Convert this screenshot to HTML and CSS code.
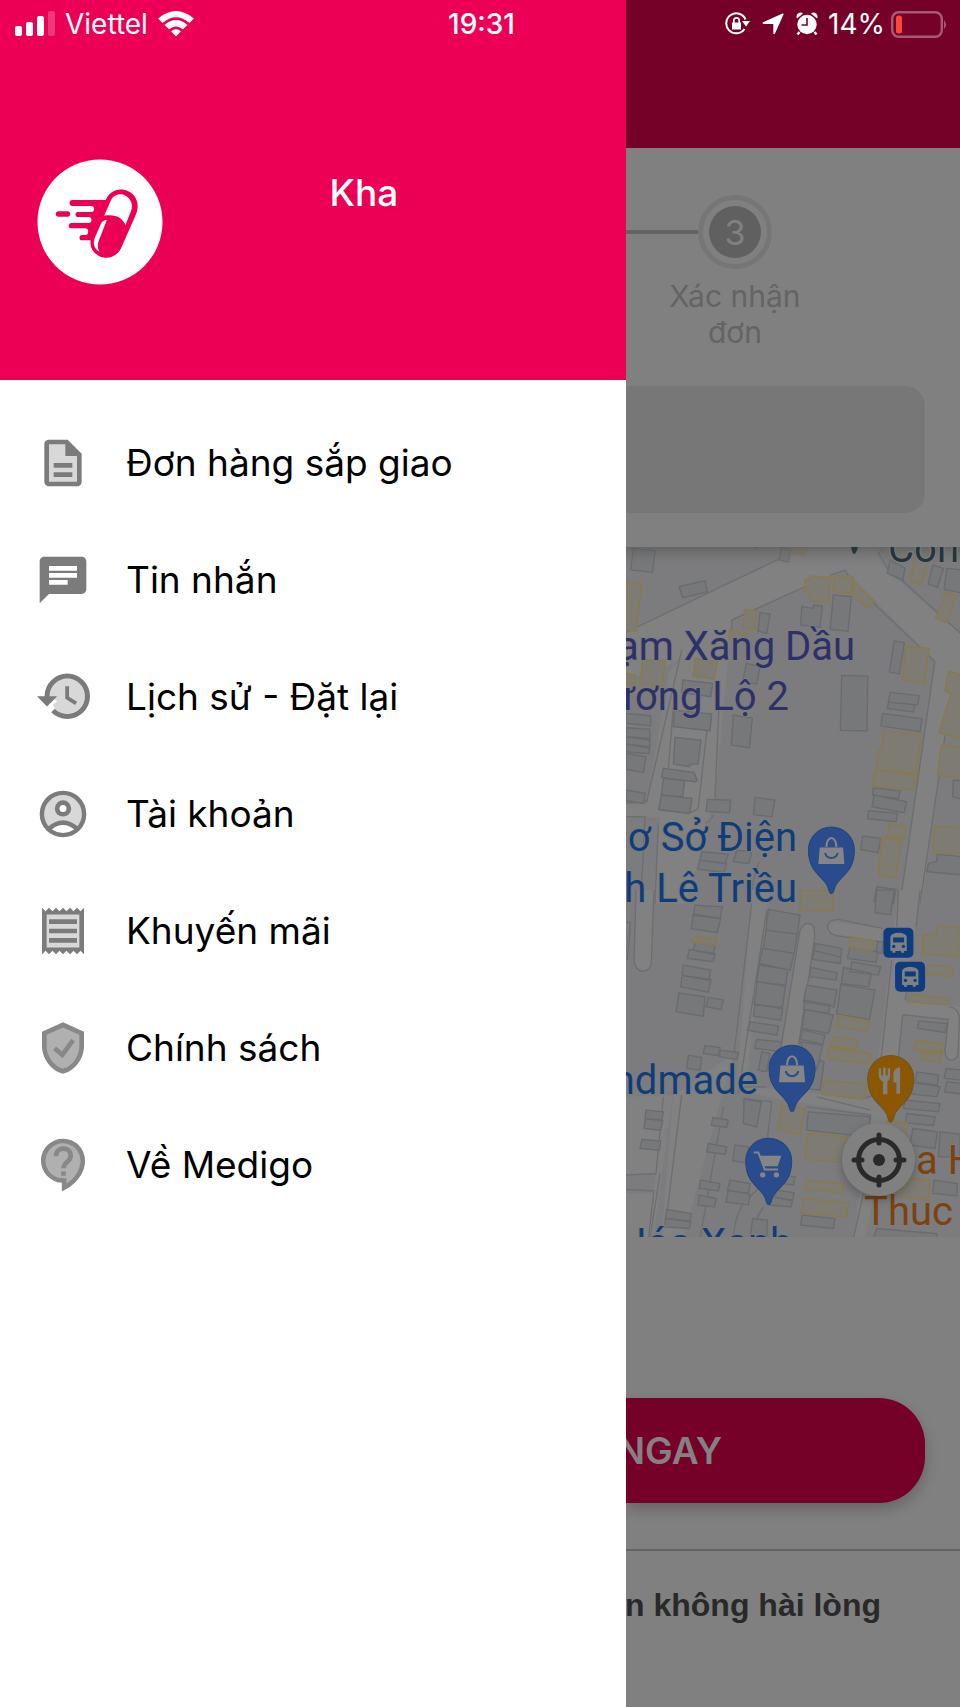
FILE: index.html
```html
<!DOCTYPE html>
<html lang="vi">
<head>
<meta charset="utf-8">
<meta name="viewport" content="width=device-width, initial-scale=1">
<title>Medigo</title>
<link rel="stylesheet" href="styles.css">
</head>
<body>
<div class="screen">
  <div class="status">
    <div class="status-left">
      <svg class="signal" viewBox="0 0 40 26" aria-hidden="true"><rect x="0" y="15" width="7" height="10" rx="2"/><rect x="11" y="11" width="7" height="14" rx="2"/><rect x="22" y="5" width="7" height="20" rx="2"/><rect x="33" y="0" width="7" height="25" rx="2" opacity=".22"/></svg>
      <span>Viettel</span>
      <svg class="wifi" viewBox="0 0 36 26" aria-hidden="true"><path d="M0 7.500Q18-7.500 36 7.500L31.500 12Q18 .500 4.500 12ZM6.500 14Q18 4 29.500 14L25 18.300Q18 12.500 11 18.300ZM13 20.200Q18 16.500 23 20.200L18 25.500Z"/></svg>
    </div>
    <time class="clock">19:31</time>
    <div class="status-right">
      <svg class="lock" viewBox="0 0 25 24" aria-hidden="true"><path d="M19.500 17A10 10 0 1 1 20.500 7.500" fill="none" stroke="#fff" stroke-width="2"/><path d="M17 9h8l-4 5.500ZM7 10.500h9v7H7Z"/><path d="M8.800 11V8.500a2.700 2.700 0 0 1 5.400 0V11" fill="none" stroke="#fff" stroke-width="1.700"/></svg>
      <svg class="arrow" viewBox="0 0 22 22" aria-hidden="true"><path d="M1 9.200 20.500.500q1.500-.300 1 1L13 20.500q-1.300 1.800-1.700-.300V11H1.700q-2-.500-.700-1.800Z"/></svg>
      <svg class="alarm" viewBox="0 0 22 24" aria-hidden="true"><path d="M3.500 20 1.500 22.500M18.500 20l2 2.500" stroke="#fff" stroke-width="2.400"/><circle cx="11" cy="12.500" r="9.700"/><path d="M1 6.500a4 4 0 0 1 6-5ZM21 6.500a4 4 0 0 0-6-5Z"/><path d="M11 6v7H5.500" fill="none" stroke="#750028" stroke-width="1.600"/></svg>
      <span>14%</span>
      <svg class="battery" viewBox="0 0 57 28" aria-hidden="true"><rect x="1.200" y="2.200" width="49.600" height="24.600" rx="6.500" fill="none" stroke="#a85a75" stroke-width="2.400"/><path d="M53 10q4 4.500 0 9Z" fill="#a85a75"/><rect x="5" y="5.500" width="6" height="18" rx="2.500" fill="#ff453a"/></svg>
    </div>
  </div>

  <aside class="drawer">
    <header class="profile">
      <svg class="logo" viewBox="0 0 375 378" role="img" aria-label="Medigo">
        <circle cx="187.500" cy="189" r="187.500" fill="#fff"/>
        <g fill="#eb0055">
          <path d="M205 123 105 123a9 9 0 0 0 0 18h56a9 9 0 0 1 0 18h-42a8 8 0 0 0 0 15h34a9 9 0 0 1 0 18h-51a8 8 0 0 0 0 16h40a9 9 0 0 1 0 20h-8a8 8 0 0 0 0 16h25q-3 33 27 48c28 12 54-2 65-25l44-100c13-30 2-58-22-70-30-14-59 2-68 26Z"/>
          <rect x="55" y="157" width="43" height="16" rx="8"/>
        </g>
        <path d="M200 170 219 127c9-22 30-25 45-17 17 9 24 27 17 45l-17 43c-8-20-29-34-64-28ZM208 183q-12 1-17 10l-19 43c-7 18-1 34 14 42-9-16-4-28 2-43Z" fill="#fff"/>
      </svg>
      <h1 class="user">Kha</h1>
    </header>
    <nav class="menu">
      <a href="#"><svg viewBox="0 0 24 24" aria-hidden="true"><path class="lt" d="M5 3h9l5 6v12H5Z"/><path d="M8 16h8v2H8zm0-4h8v2H8zm6-10H6c-1.100 0-2 .900-2 2v16c0 1.100.890 2 1.990 2H18c1.100 0 2-.900 2-2V8l-6-6zm4 18H6V4h7v5h5v11z"/></svg><span>Đơn hàng sắp giao</span></a>
      <a href="#"><svg viewBox="0 0 24 24" aria-hidden="true"><path d="M4 2h16c1.100 0 2 .900 2 2v12c0 1.100-.900 2-2 2H6l-4 4V4c0-1.100.900-2 2-2zm2 12h8v-2H6v2zm0-3h12V9H6v2zm0-3h12V6H6v2z"/></svg><span>Tin nhắn</span></a>
      <a href="#"><svg viewBox="0.200 1.200 22.200 22.200" aria-hidden="true"><path class="lt" d="M6 12a7 7 0 1 1 2.500 5.300L7.200 15.500 9 14Z"/><path d="M13 3a9 9 0 0 0-9 9H1l3.960 4.030L9 12H6c0-3.870 3.130-7 7-7s7 3.130 7 7-3.130 7-7 7c-1.930 0-3.680-.790-4.940-2.060l-1.420 1.420A8.954 8.954 0 0 0 13 21a9 9 0 0 0 0-18zM12.200 8v5l3.900 2.500.8-1.300-3.200-2V8z"/></svg><span>Lịch sử - Đặt lại</span></a>
      <a href="#"><svg viewBox="0 0 24 24" aria-hidden="true"><circle cx="12" cy="12" r="10"/><circle class="lt" cx="12" cy="12" r="8.100"/><path d="M5.500 17.500Q12 11.800 18.500 17.500L16 20.500H8Z"/><path d="M7.200 18.600Q12 14.800 16.800 18.600Q12 21.700 7.200 18.600Z" fill="#fff"/><circle cx="12" cy="9.600" r="3.500"/><circle cx="12" cy="9.600" r="1.500" fill="#fff"/></svg><span>Tài khoản</span></a>
      <a href="#"><svg viewBox="0 0 24 24" aria-hidden="true"><path d="M3 22l1.500-1.500L6 22l1.500-1.500L9 22l1.500-1.500L12 22l1.500-1.500L15 22l1.500-1.500L18 22l1.500-1.500L21 22V2l-1.500 1.500L18 2l-1.500 1.500L15 2l-1.500 1.500L12 2l-1.500 1.500L9 2 7.500 3.500 6 2 4.500 3.500 3 2z"/><path class="lt" d="M5 4.900h14v14.200H5Z"/><path d="M6 7h12v2H6zM6 11h12v2H6zM6 15h12v2H6z"/></svg><span>Khuyến mãi</span></a>
      <a href="#" class="soft"><svg viewBox="0 0 24 24" aria-hidden="true"><path d="M12 1 3 5v6c0 5.550 3.840 10.740 9 12 5.160-1.260 9-6.450 9-12V5z"/><path class="lt" d="m12 3.190-7 3.110V11c0 4.520 2.980 8.690 7 9.930 4.020-1.240 7-5.410 7-9.930V6.300z"/><path class="ln" d="m8.400 12.100 3.300 2.800 4.600-6.300"/></svg><span>Chính sách</span></a>
      <a href="#" class="soft"><svg viewBox="0 0 24 24" aria-hidden="true"><path d="M11.500 23.300V19.600A9.450 9.450 0 1 1 21.450 10.200C21.400 16 17 21 11.500 23.300Z"/><path class="lt" d="M13.500 20V17.700H12A7.500 7.500 0 1 1 19.500 10.200C19.500 14 17 17.800 13.500 20Z"/><path class="ln" d="M9 8.200C9 3.800 15.300 4 15.300 8c0 2.700-3.100 2.800-3.100 5.400"/><path d="M11.200 14.700h2v1.900h-2z"/></svg><span>Về Medigo</span></a>
    </nav>
  </aside>

  <main class="page">
    <header class="topbar"></header>
    <section class="order">
      <div class="step">
        <div class="step-head"><i class="line"></i><span class="ring"><b class="num">3</b></span><i class="gap"></i></div>
        <p class="step-label">Xác nhận<br>đơn</p>
      </div>
      <div class="address"></div>
    </section>

    <section class="map">
      <svg class="map-art" viewBox="0 0 334 690" preserveAspectRatio="xMinYMin slice" role="img" aria-label="Bản đồ">
        <defs>
          <linearGradient id="shade" x1="0" y1="0" x2="0" y2="1"><stop offset="0" stop-color="#555" stop-opacity=".6"/><stop offset="1" stop-color="#777" stop-opacity="0"/></linearGradient>
          <path id="pin" d="M0 100C-6 99-7 92-11 79-22 48-69 38-69-31A69 69 0 0 1 69-31C69 38 22 48 11 79 7 92 6 99 0 100Z"/>
          <g id="bag"><path d="M-35-37H35L39 13H-39Z"/><path d="M-15-38c0-36 30-36 30 0" fill="none" stroke="#858585" stroke-width="6"/><path d="M-19-20c6 20 32 20 38 0" fill="none" stroke="#2b4c8c" stroke-width="6"/></g>
          <g id="bus"><rect width="90" height="90" rx="15" fill="#0e3c80"/><path d="M21 70V27q3-11 24-12 22 1 25 12V70H62v5H53V70H36v5H27V70Z" fill="#808080"/><path d="M29 29H62V44H29Z" fill="#0e3c80"/><circle cx="31" cy="56" r="5" fill="#0e3c80"/><circle cx="60" cy="56" r="5" fill="#0e3c80"/></g>
        </defs>
        <rect width="334" height="690" fill="#7c7c7e"/>

        <g transform="translate(-6 -7) scale(.333333)">
          <path class="road" d="M0 280 485 55V20H800L775 40 810 100 1030 290V600L975 590 905 1090H840L944 365 925 345 675 90 335 240 332 275 285 775 270 830 200 1090H100L120 830H0V790H80L145 400 180 360 0 430Z"/>
          <path class="edge" d="M0 285 475 58M485 0 480 60M775 40 805 0M775 40 810 100 845 120 1030 288M335 275V240L555 140M630 105 675 90 685 108M760 190 925 345 944 365 840 1090M975 585 900 1090M185 330 80 785 18 790M160 500 145 690M300 420 285 775M262 560 235 800Q230 815 200 818L120 810M18 830H75L62 1090M280 825Q270 845 255 850M115 850 105 1090M420 965Q405 975 390 1090M340 0 415 25"/>
          <path class="bld" d="M40 25 106 32 97 97 32 90ZM178 140 255 122 262 155 188 174ZM420 218 450 222 440 280 414 273ZM484 20 512 28 505 66 478 60ZM545 200 580 205V195L607 198 600 262 542 255ZM640 165 694 170 684 274 630 268ZM665 406 743 408 741 572 661 571ZM822 303 853 308 838 402 808 396ZM810 457 898 467 892 495 805 486ZM805 486 885 494 880 516 802 505ZM788 520 906 536 900 575 782 558ZM760 743 840 752 835 775 758 765ZM762 765 860 785 852 818 756 800ZM746 812 832 820 828 845 742 836ZM728 888 782 895 774 938 722 928ZM810 60 855 85 848 120 802 100ZM938 75 970 85 952 142 924 132ZM980 85 1030 90V160L972 148ZM340 525 397 535 388 623 334 615ZM165 592 243 600 234 672H212L208 680 160 672ZM188 420 278 430 272 470 185 458ZM163 510 275 522 270 572 160 560ZM130 685 222 697 232 722 226 725 125 712ZM130 715 194 722 188 770 124 765ZM124 765 216 775 208 820 116 808ZM262 778 332 780 328 818 258 814ZM405 772 464 780 456 830 400 824ZM18 520 92 527V557L18 550ZM18 563 90 568V595L18 590ZM18 590 90 600V620L18 612ZM18 612 88 625V641L18 635ZM18 640 78 650 70 697 18 688ZM18 750 76 760 70 790 18 782ZM770 1040 828 1048 820 1090 762 1085ZM1000 720 1030 722V780L998 770ZM925 970 950 965 952 943 1030 950V1005L920 995ZM245 935 325 942 315 970 240 960ZM240 960 320 970 312 997 234 987ZM350 930 395 935 387 970 340 965ZM380 370 420 380 410 432 367 425Z"/>
          <path class="yel" d="M555 122 575 108 632 112 625 187 570 183 568 158 553 154ZM642 108 700 110 694 160 640 155ZM706 130 763 184 742 204 694 163ZM374 208 410 214 404 270 369 262ZM18 130 66 130 48 273 18 272ZM515 20 560 25 555 48 512 40ZM884 55 922 65 905 135 870 124ZM978 156 1008 168 980 248 946 236ZM856 318 927 325 914 430 846 420ZM985 393 1030 405V600L956 578 992 462 974 452ZM790 573 906 582 888 700 770 690 774 630H784ZM764 690 888 704 880 748 758 740ZM964 613 1030 624V714L952 706ZM808 852 858 858 852 896 802 890ZM784 892 844 900 828 1012 776 1006ZM942 860 1030 862V940H938ZM328 270 382 280 376 305 326 300ZM68 358 136 362 125 440 60 432ZM226 355 292 365 282 418 218 408ZM18 400 45 405V430L18 435Z"/>
        </g>
        <rect width="334" height="20" fill="url(#shade)"/>
        <path class="slate" d="M225 0H232Q230 7 228 7 226 6 225 0Z"/>

        <g transform="translate(-6 343) scale(.333333)">
          <path class="road" d="M48 0 45 215Q50 243 72 243 92 240 94 215L102 0ZM395 0 340 490 190 1045H125L160 600 100 1045H18V910H100L108 850H18V620L160 615 342 490ZM395 0H450L410 270 380 590 755 625 785 430 835 0H900L855 330 1020 350V490Q1010 515 985 508 970 500 975 470L982 390 845 375 820 625 735 1045H700L750 670 460 625 350 600ZM540 115Q565 90 580 115L583 140 530 500H480ZM640 95Q620 110 630 130L780 165 785 115Z"/>
          <path class="edge" d="M48 0 42 210Q45 243 72 243 92 240 94 215L102 0M0 95 32 97 22 210M395 40 342 490M440 60 355 610M540 120Q560 85 582 110L584 140 532 490M540 120 482 475M788 115 655 88Q620 90 622 112 625 130 650 137L780 155M835 0 830 110M815 210 772 610 735 625M900 0 888 110M860 305 855 330M985 350Q1012 350 1018 380L1014 490Q1010 512 990 510 970 500 976 470L984 388 848 374 835 500M370 625 455 635 430 850M560 650 752 675 748 700M185 615 142 960M130 620 108 850 18 855M120 850 90 1045M18 898 102 902 85 1045M340 1045Q345 960 385 925L430 880M405 1000Q412 975 430 950M310 650 240 1045M730 910 700 1045M355 590 440 590M590 620 752 660"/>
          <path class="bld" d="M225 45 307 50 300 85 220 75ZM220 72 302 85 292 128 214 116ZM226 155 285 165 280 192 220 180ZM208 178 285 190 280 215 202 205ZM190 225 272 240 266 270 186 256ZM186 256 273 268 265 306 182 290ZM177 308 255 320 250 378 168 365ZM265 322 310 330 303 358 258 350ZM445 58 540 75 532 132 438 120ZM438 120 532 132 522 190 430 175ZM428 175 522 190 510 240 418 220ZM418 225 503 238 497 285 410 275ZM412 275 496 288 487 352 402 342ZM405 342 488 356 482 390 400 378ZM390 395 476 408 470 435 382 420ZM410 448 485 455 480 485 404 474ZM585 160 665 175 660 220 578 208ZM578 180 660 200M572 232 652 248 648 270 570 260ZM560 285 650 300 642 350 550 335ZM555 330 630 345 625 370 550 358ZM555 358 640 375 625 430 545 415ZM548 420 615 435 608 462 540 448ZM540 455 608 465 600 500 590 540 580 540ZM690 170 775 185 768 217 682 205ZM695 215 782 230 775 255 690 245ZM670 232 755 250 745 290 664 280ZM662 283 765 300 748 388 650 372ZM770 0 822 0 812 74 764 68ZM772 155 790 155 785 190 768 188ZM896 392 982 400 975 427 892 415ZM254 466 300 472 295 496 250 490ZM302 480 355 487 350 508 298 500ZM205 495 245 502 240 540 200 535ZM372 627 424 635 410 710 370 700ZM278 682 325 690 320 712 274 706ZM78 660 130 665 125 690 75 685ZM75 685 128 692 122 720 72 715ZM66 748 122 752 118 780 60 775ZM265 760 320 770 316 792 260 785ZM345 765 385 770 380 818 338 812ZM242 870 300 880 295 902 238 895ZM238 915 288 925 284 950 234 945ZM140 958 214 970 210 992 136 985ZM136 985 212 995 208 1015 134 1010ZM330 870 390 880 385 910 322 900ZM325 900 390 912 385 944 318 936ZM398 985 442 990 440 1045H390ZM565 665 750 680 745 740 560 720ZM546 975 645 985 640 1015 542 1005ZM942 870 1012 880 1010 917 938 910ZM878 715 952 725 945 775 870 765ZM960 725 1020 732V800H955ZM860 670 945 680 940 706 856 698ZM890 545 955 555 952 585 885 575ZM865 575 960 590 950 620 860 610ZM855 630 960 640 955 665 850 655ZM978 535 1030 540V570L972 565ZM980 575 1030 580V612L974 605ZM425 485 450 490 440 545 415 540ZM770 1015 950 1030V1045H760ZM470 900 522 908 518 930 465 920ZM455 920 518 932 512 950 450 945ZM490 855 525 860 520 885 485 880ZM600 510 612 515 600 600 560 595Z"/>
          <path class="yel" d="M540 0H642L638 65 540 60ZM222 138 290 145 286 165 218 157ZM692 140 764 153 756 183 686 170ZM910 135 950 130V108L1020 112V200L905 192ZM925 225 1000 230 996 260 920 252ZM868 312 986 325 980 345 862 335ZM655 375 750 392 740 424 648 410ZM640 438 714 450 708 480 632 468ZM630 472 755 492 745 522 622 505ZM888 450 970 460 965 487 880 478ZM905 485 965 490 960 517 898 508ZM612 570 740 582 730 628 604 612ZM485 645 556 655 540 733 475 720ZM560 730 680 740V818L555 808ZM560 870 672 882 668 908 555 900ZM550 925 685 938 680 980 542 970ZM800 690 862 698 852 780H790ZM850 862 930 870 925 930 840 920Z"/>
          <use href="#bus" x="790" y="113"/><use href="#bus" x="825" y="215"/>
        </g>

        <g class="poi">
          <text x="229" y="113" text-anchor="end" class="violet">ạm Xăng Dầu</text>
          <text x="163" y="163" text-anchor="end" class="violet">ương Lộ 2</text>
          <text x="171" y="304" text-anchor="end" class="blue">ơ Sở Điện</text>
          <text x="171" y="355" text-anchor="end" class="blue">h Lê Triều</text>
          <text x="132" y="547" text-anchor="end" class="blue">ndmade</text>
          <text x="166" y="710" text-anchor="end" class="blue">Hóa Xanh</text>
          <text x="262" y="15" class="slate">Con</text>
          <text x="290" y="627" class="amber">a H</text>
          <text x="238" y="678" class="amber">Thuc</text>
        </g>
        <g transform="translate(-6 -7) scale(.333333)">
          <use href="#pin" x="634" y="961" class="bp"/><use href="#bag" x="634" y="959" fill="#858585"/>
        </g>
        <g transform="translate(-6 343) scale(.333333)">
          <use href="#pin" x="516" y="565" class="bp"/><use href="#bag" x="516" y="563" fill="#858585"/>
          <use href="#pin" x="446" y="844" class="bp"/>
          <path d="M418 797H484L473 828H432Z" fill="#858585"/><path d="M401 787H415L434 838H474" fill="none" stroke="#858585" stroke-width="6"/><circle cx="428" cy="854" r="8" fill="#858585"/><circle cx="469" cy="854" r="8" fill="#858585"/>
          <use href="#pin" x="812" y="596" fill="#8b5700" stroke="#6d5426" stroke-width="3"/>
          <path d="M776 534h7v22h6V532h8v24h6V534h7v24q-1 12-8 16v38H789V574q-11-4-13-16ZM820 577V548q4-16 20-17v80H829V577Z" fill="#808080"/>
        </g>
      </svg>
      <button class="locate" aria-label="Vị trí của tôi"><svg viewBox="0 0 56 56" fill="none" stroke="#292929" stroke-width="5" stroke-linecap="round"><circle cx="28" cy="28" r="20.500"/><path d="M28 3v8M28 45v8M3 28h8M45 28h8"/><circle cx="28" cy="28" r="6" fill="#292929" stroke="none"/></svg></button>
    </section>

    <section class="actions"><button class="cta">NGAY</button></section>
    <footer class="note">n không hài lòng</footer>
  </main>
</div>
</body>
</html>
```

FILE: styles.css
```css
* { box-sizing: border-box; }
body { margin: 0; font-family: Inter, "Noto Sans", sans-serif; background: #808080; }
button { font: inherit; border: 0; padding: 0; }
.screen { position: relative; display: grid; grid-template-columns: 65.2% minmax(0, 1fr); min-height: 100vh; }

.status { position: absolute; z-index: 2; inset: 0 0 auto; display: grid; grid-template-columns: 1fr auto 1fr; align-items: center; height: 48px; padding: 0 12px 0 15px; color: #fff; font-size: 28px; }
.status svg { fill: #fff; flex: none; }
.status-left, .status-right { display: flex; align-items: center; }
.status-left { gap: 10px; }
.status-right { justify-content: flex-end; }
.clock { font-weight: 500; }
.signal { width: 40px; height: 26px; }
.wifi { width: 36px; height: 26px; }
.lock { width: 25px; height: 24px; margin-right: 12px; }
.arrow { width: 22px; height: 22px; margin-right: 12px; }
.alarm { width: 22px; height: 24px; margin-right: 10px; }
.battery { width: 57px; height: 28px; margin-left: 6px; }

.drawer { background: #fff; }
.profile { height: 380px; background: #eb0055; color: #fff; display: flex; align-items: flex-start; padding: 159px 61px 0 37px; }
.logo { width: 126px; height: 126px; flex: none; }
.user { flex: 1; margin: 11px 0 0; text-align: center; font-size: 37px; line-height: 46px; font-weight: 500; }
.menu { display: flex; flex-direction: column; padding: 24px 35px; }
.menu a { display: flex; align-items: center; gap: 35px; height: 117px; color: #000; text-decoration: none; font-size: 37px; white-space: nowrap; }
.menu svg { width: 56px; height: 56px; flex: none; fill: #7b7b7b; }
.menu .lt { fill: #d8d8d8; }
.menu .soft svg { fill: #888; }
.menu .soft .lt { fill: #b0b0b0; }
.menu .ln { fill: none; stroke: #888; stroke-width: 2; }

.page { display: flex; flex-direction: column; overflow: hidden; background: #808080; }
.topbar { height: 148px; background: #750028; }
.order { height: 399px; padding-top: 47px; }
.step { width: 218px; }
.step-head { display: flex; align-items: center; }
.line, .gap { flex: 1; height: 4px; }
.line { background: #646464; }
.ring { display: grid; place-items: center; width: 74px; height: 74px; border: 5px solid #767676; border-radius: 50%; }
.num { display: grid; place-items: center; width: 52px; height: 52px; border-radius: 50%; background: #606060; color: #808080; font-size: 34px; font-weight: 400; }
.step-label { margin: 9px 0 0; text-align: center; color: #646464; font-size: 30px; line-height: 36px; }
.address { height: 127px; margin: 36px 35px 0 0; border-radius: 0 20px 20px 0; background: #777; }

.map { position: relative; height: 690px; overflow: hidden; }
.map-art { display: block; width: 100%; height: 100%; }
.road { fill: #818182; }
.edge { fill: none; stroke: #6d6e70; stroke-width: 4; }
.bld { fill: #76787a; stroke: #696b6e; stroke-width: 4; }
.yel { fill: #7e7b73; stroke: #89794d; stroke-width: 4; }
.poi text { font-family: Roboto, "Noto Sans", sans-serif; font-size: 40px; stroke: #7d7d7e; stroke-width: 2px; paint-order: stroke; }
.slate { fill: #26343b; }
.violet { fill: #2e3168; }
.blue { fill: #103d7a; }
.amber { fill: #7a430f; }
.bp { fill: #2b4c8c; stroke: #23457f; stroke-width: 3px; }
.locate { position: absolute; right: 45px; bottom: 41px; display: grid; place-items: center; width: 73px; height: 73px; border-radius: 50%; background: #808080; box-shadow: 0 4px 10px rgba(0, 0, 0, .25); }
.locate svg { width: 56px; height: 56px; }

.actions { padding: 161px 35px 46px 0; }
.cta { display: block; width: 100%; height: 105px; border-radius: 0 46px 46px 0; background: #750028; color: #858085; text-align: left; text-indent: -9px; font-size: 37px; font-weight: 600; box-shadow: 0 6px 14px rgba(0, 0, 0, .22); }
.note { flex: 1; border-top: 2px solid #646464; padding: 34px 79px 0 0; display: flex; justify-content: flex-end; white-space: nowrap; color: #292929; font: bold 32px/40px "Liberation Sans", Arial, sans-serif; }
```
